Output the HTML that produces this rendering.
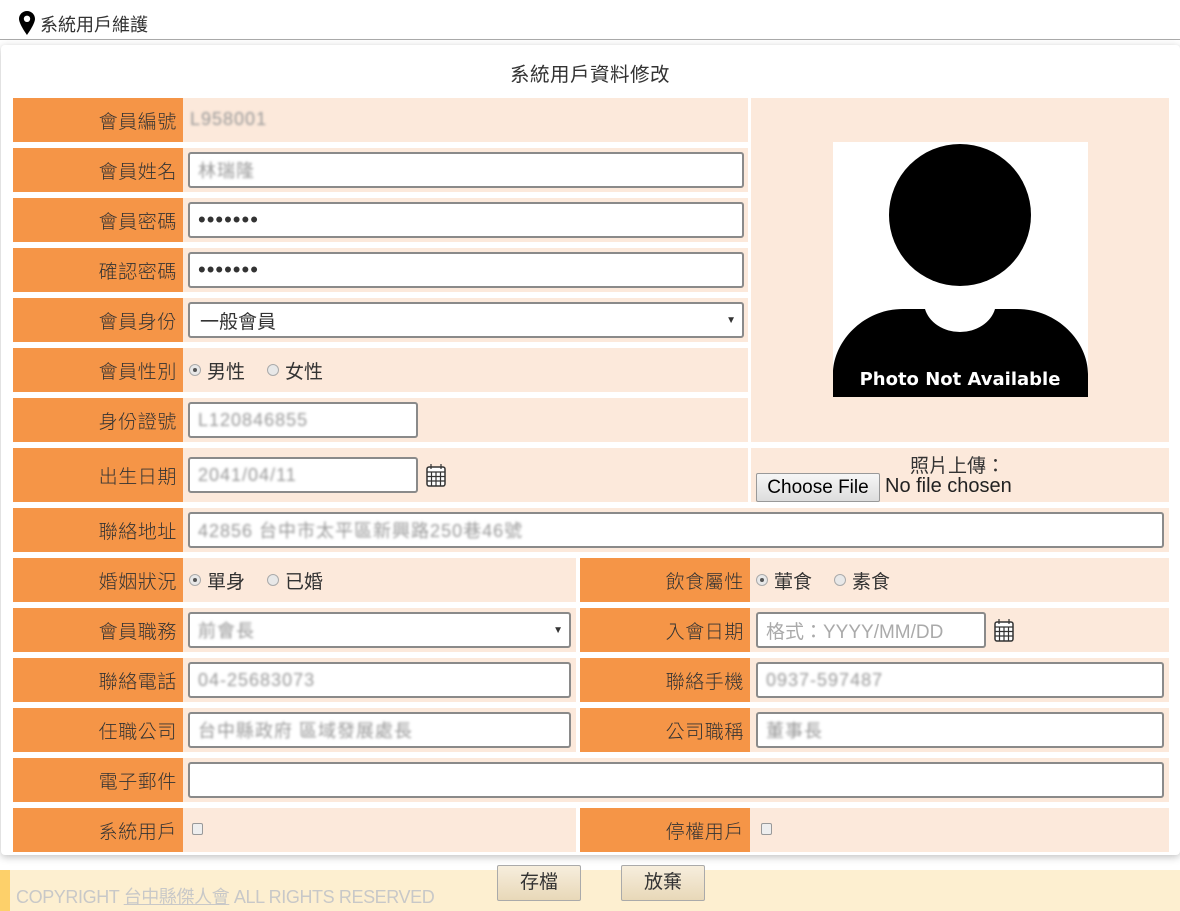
<!DOCTYPE html>
<html><head><meta charset="utf-8">
<style>
*{box-sizing:border-box;margin:0;padding:0}
body{width:1180px;height:911px;position:relative;background:#fff;font-family:"Liberation Sans","Noto Sans CJK TC",sans-serif;color:#333;overflow:hidden}
.a{position:absolute}
.lb{position:absolute;background:#f59547;text-align:right;padding-right:6px;font-size:19px;letter-spacing:0.6px;color:#333;display:flex;align-items:center;justify-content:flex-end;font-weight:300}
.vl{position:absolute;background:#fce9db}
.in{position:absolute;background:#fff;border:2px solid #8a8a8a;border-radius:3px;height:36px;font-size:18px;padding-left:8px;display:flex;align-items:center}
.bl{color:#999;letter-spacing:1px;filter:blur(1.3px)}
.rd{display:inline-block;width:12px;height:12px;border:1px solid #aaa;border-radius:50%;background:#e8e8e8;vertical-align:middle;margin-right:6px;position:relative}
.rd.on::after{content:"";position:absolute;left:3px;top:3px;width:4px;height:4px;border-radius:50%;background:#555}
.rt{position:absolute;font-size:19px;display:flex;align-items:center}
.cb{position:absolute;width:11px;height:12px;border:1px solid #999;border-radius:2px;background:#eee}
.cal{position:absolute;width:20px;height:24px}
</style></head><body>
<div class="a" style="left:0;top:0;width:1180px;height:40px;border-bottom:1px solid #aaa"></div>
<svg class="a" style="left:19px;top:11px" width="16" height="24" viewBox="0 0 16 24"><path d="M8 0C3.6 0 0 3.5 0 7.9 0 13 8 24 8 24S16 13 16 7.9C16 3.5 12.4 0 8 0Zm0 11a3.2 3.2 0 1 1 0-6.4 3.2 3.2 0 0 1 0 6.4Z" fill="#000"/></svg>
<div class="a" style="left:40px;top:11px;font-size:18px;color:#333">系統用戶維護</div>
<div class="a" style="left:1px;top:45px;width:1179px;height:810px;background:#fff;box-shadow:0 2px 8px rgba(0,0,0,.25);border-radius:4px"></div>
<div class="a" style="left:0;top:58px;width:1180px;text-align:center;font-size:19.5px;letter-spacing:0.5px">系統用戶資料修改</div>

<div class="lb" style="left:13px;top:98px;width:170px;height:44px">會員編號</div><div class="vl" style="left:183px;top:98px;width:565px;height:44px"></div>
<div class="a bl" style="left:190px;top:109px;font-size:18px">L958001</div>

<div class="lb" style="left:13px;top:148px;width:170px;height:44px">會員姓名</div><div class="vl" style="left:183px;top:148px;width:565px;height:44px"></div>
<div class="in" style="left:188px;top:152px;width:556px"><span class="bl">林瑞隆</span></div>

<div class="lb" style="left:13px;top:198px;width:170px;height:44px">會員密碼</div><div class="vl" style="left:183px;top:198px;width:565px;height:44px"></div>
<div class="in" style="left:188px;top:202px;width:556px;font-size:22px;letter-spacing:1px">•••••••</div>

<div class="lb" style="left:13px;top:248px;width:170px;height:44px">確認密碼</div><div class="vl" style="left:183px;top:248px;width:565px;height:44px"></div>
<div class="in" style="left:188px;top:252px;width:556px;font-size:22px;letter-spacing:1px">•••••••</div>

<div class="lb" style="left:13px;top:298px;width:170px;height:44px">會員身份</div><div class="vl" style="left:183px;top:298px;width:565px;height:44px"></div>
<div class="in" style="left:188px;top:302px;width:556px;padding-left:10px;font-size:19px">一般會員<span style="position:absolute;right:6px;font-size:10px">▼</span></div>

<div class="lb" style="left:13px;top:348px;width:170px;height:44px">會員性別</div><div class="vl" style="left:183px;top:348px;width:565px;height:44px"></div>
<div class="rt" style="left:189px;top:348px;height:44px"><span class="rd on"></span>男性<span style="width:22px"></span><span class="rd"></span>女性</div>

<div class="lb" style="left:13px;top:398px;width:170px;height:44px">身份證號</div><div class="vl" style="left:183px;top:398px;width:565px;height:44px"></div>
<div class="in" style="left:188px;top:402px;width:230px"><span class="bl">L120846855</span></div>

<div class="vl" style="left:751px;top:98px;width:418px;height:344px"></div>
<svg class="a" style="left:833px;top:142px" width="255" height="255" viewBox="0 0 255 255"><rect width="255" height="255" fill="#fff"/><circle cx="127" cy="73" r="71" fill="#000"/><path d="M0 255V232C0 200 30 167 70 167H92A36 30 0 0 0 162 167H184C225 167 255 200 255 232V255Z" fill="#000"/><text x="127" y="243" fill="#fff" font-family="DejaVu Sans,sans-serif" font-weight="bold" font-size="18" text-anchor="middle">Photo Not Available</text></svg>

<div class="lb" style="left:13px;top:448px;width:170px;height:54px">出生日期</div><div class="vl" style="left:183px;top:448px;width:565px;height:54px"></div>
<div class="in" style="left:188px;top:457px;width:230px"><span class="bl">2041/04/11</span></div>
<svg class="cal" style="left:426px;top:463px" viewBox="0 0 20 24"><rect x="1" y="4" width="18" height="19" rx="2" fill="#fff" stroke="#333" stroke-width="1.5"/><path d="M1 9H19M1 13.5H19M1 18H19M5.5 9V23M10 9V23M14.5 9V23M5 1V6M15 1V6" stroke="#333" stroke-width="1.2"/></svg>
<div class="vl" style="left:751px;top:448px;width:418px;height:54px"></div>
<div class="a" style="left:910px;top:451px;font-size:19px">照片上傳：</div>
<div class="a" style="left:756px;top:473px;width:124px;height:29px;border:1px solid #999;border-radius:2px;background:linear-gradient(#f6f6f6,#ddd);font-size:19px;color:#000;text-align:center;line-height:27px">Choose File</div>
<div class="a" style="left:885px;top:475px;font-size:20px;color:#222">No file chosen</div>

<div class="lb" style="left:13px;top:508px;width:170px;height:44px">聯絡地址</div><div class="vl" style="left:183px;top:508px;width:986px;height:44px"></div>
<div class="in" style="left:188px;top:512px;width:976px"><span class="bl">42856 台中市太平區新興路250巷46號</span></div>

<div class="lb" style="left:13px;top:558px;width:170px;height:44px">婚姻狀況</div><div class="vl" style="left:183px;top:558px;width:393px;height:44px"></div>
<div class="rt" style="left:189px;top:558px;height:44px"><span class="rd on"></span>單身<span style="width:22px"></span><span class="rd"></span>已婚</div>
<div class="lb" style="left:580px;top:558px;width:170px;height:44px">飲食屬性</div><div class="vl" style="left:750px;top:558px;width:419px;height:44px"></div>
<div class="rt" style="left:756px;top:558px;height:44px"><span class="rd on"></span>葷食<span style="width:22px"></span><span class="rd"></span>素食</div>

<div class="lb" style="left:13px;top:608px;width:170px;height:44px">會員職務</div><div class="vl" style="left:183px;top:608px;width:393px;height:44px"></div>
<div class="in" style="left:188px;top:612px;width:383px"><span class="bl">前會長</span><span style="position:absolute;right:6px;font-size:10px">▼</span></div>
<div class="lb" style="left:580px;top:608px;width:170px;height:44px">入會日期</div><div class="vl" style="left:750px;top:608px;width:419px;height:44px"></div>
<div class="in" style="left:756px;top:612px;width:230px;color:#aaa;font-size:19px">格式：YYYY/MM/DD</div>
<svg class="cal" style="left:994px;top:618px" viewBox="0 0 20 24"><rect x="1" y="4" width="18" height="19" rx="2" fill="#fff" stroke="#333" stroke-width="1.5"/><path d="M1 9H19M1 13.5H19M1 18H19M5.5 9V23M10 9V23M14.5 9V23M5 1V6M15 1V6" stroke="#333" stroke-width="1.2"/></svg>

<div class="lb" style="left:13px;top:658px;width:170px;height:44px">聯絡電話</div><div class="vl" style="left:183px;top:658px;width:393px;height:44px"></div>
<div class="in" style="left:188px;top:662px;width:383px"><span class="bl">04-25683073</span></div>
<div class="lb" style="left:580px;top:658px;width:170px;height:44px">聯絡手機</div><div class="vl" style="left:750px;top:658px;width:419px;height:44px"></div>
<div class="in" style="left:756px;top:662px;width:408px"><span class="bl">0937-597487</span></div>

<div class="lb" style="left:13px;top:708px;width:170px;height:44px">任職公司</div><div class="vl" style="left:183px;top:708px;width:393px;height:44px"></div>
<div class="in" style="left:188px;top:712px;width:383px"><span class="bl">台中縣政府 區域發展處長</span></div>
<div class="lb" style="left:580px;top:708px;width:170px;height:44px">公司職稱</div><div class="vl" style="left:750px;top:708px;width:419px;height:44px"></div>
<div class="in" style="left:756px;top:712px;width:408px"><span class="bl">董事長</span></div>

<div class="lb" style="left:13px;top:758px;width:170px;height:44px">電子郵件</div><div class="vl" style="left:183px;top:758px;width:986px;height:44px"></div>
<div class="in" style="left:188px;top:762px;width:976px"></div>

<div class="lb" style="left:13px;top:808px;width:170px;height:44px">系統用戶</div><div class="vl" style="left:183px;top:808px;width:393px;height:44px"></div>
<div class="cb" style="left:192px;top:823px"></div>
<div class="lb" style="left:580px;top:808px;width:170px;height:44px">停權用戶</div><div class="vl" style="left:750px;top:808px;width:419px;height:44px"></div>
<div class="cb" style="left:761px;top:823px"></div>

<div class="a" style="left:0;top:870px;width:1180px;height:41px;background:#fdefd0"></div>
<div class="a" style="left:0;top:870px;width:10px;height:41px;background:#fdd06a"></div>
<div class="a" style="left:16px;top:883px;font-size:18px;color:#c8c8c8;letter-spacing:-0.4px">COPYRIGHT <u>台中縣傑人會</u> ALL RIGHTS RESERVED</div>
<div class="a" style="left:497px;top:865px;width:84px;height:36px;border:1px solid #aaa;border-radius:2px;background:linear-gradient(#f7eedd,#e8d8b8);font-size:19px;text-align:center;line-height:34px">存檔</div>
<div class="a" style="left:621px;top:865px;width:84px;height:36px;border:1px solid #aaa;border-radius:2px;background:linear-gradient(#f7eedd,#e8d8b8);font-size:19px;text-align:center;line-height:34px">放棄</div>
</body></html>
